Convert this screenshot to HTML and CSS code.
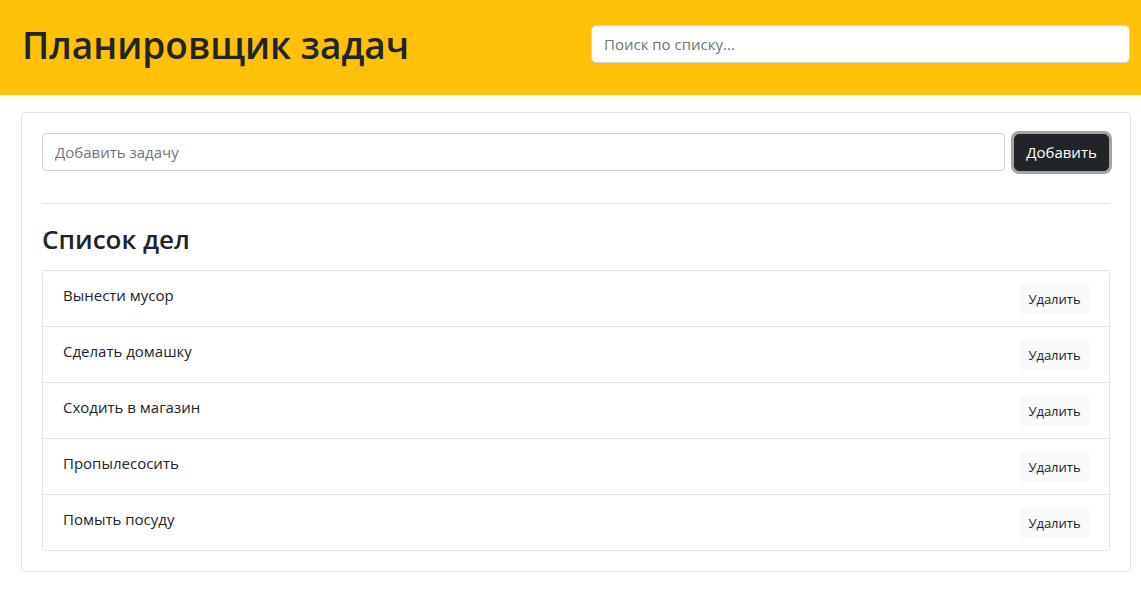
FILE: index.html
```html
<!DOCTYPE html>
<html lang="ru">
<head>
<meta charset="utf-8">
<title>Планировщик задач</title>
<link rel="stylesheet" href="styles.css">
</head>
<body>
<header class="topbar">
  <h1 class="title">Планировщик задач</h1>
  <input class="search" type="text" placeholder="Поиск по списку...">
</header>
<main class="card">
  <form class="add-form">
    <input class="add-input" type="text" placeholder="Добавить задачу">
    <button class="add-btn" type="button">Добавить</button>
  </form>
  <hr class="divider">
  <h3 class="list-title">Список дел</h3>
  <ul class="list">
    <li class="item"><span class="item-text">Вынести мусор</span><button class="del-btn" type="button">Удалить</button></li>
    <li class="item"><span class="item-text">Сделать домашку</span><button class="del-btn" type="button">Удалить</button></li>
    <li class="item"><span class="item-text">Сходить в магазин</span><button class="del-btn" type="button">Удалить</button></li>
    <li class="item"><span class="item-text">Пропылесосить</span><button class="del-btn" type="button">Удалить</button></li>
    <li class="item"><span class="item-text">Помыть посуду</span><button class="del-btn" type="button">Удалить</button></li>
  </ul>
</main>
</body>
</html>
```
FILE: styles.css
```css
* { box-sizing: border-box; }
body {
  margin: 0;
  font-family: "Open Sans", "Noto Sans", sans-serif;
  color: #212529;
  background: #fff;
}
.topbar {
  background: #ffc107;
  height: 95px;
  display: flex;
  align-items: center;
  padding: 0 11px 0 22px;
}
.title {
  flex: 1;
  margin: 0;
  font-size: 37px;
  font-weight: 600;
  color: #212529;
  line-height: 1.2;
  position: relative;
  top: -2px;
}
.search {
  width: 539px;
  height: 38px;
  margin-top: -7px;
  border: 1px solid #ced4da;
  border-radius: 5px;
  padding: 0 12px;
  font: inherit;
  font-size: 15px;
  color: #212529;
  background: #fff;
}
.search::placeholder, .add-input::placeholder { color: #6c757d; }
.card {
  margin: 17px 10px 0 21px;
  border: 1px solid #dee2e6;
  border-radius: 4px;
  padding: 20px;
}
.add-form {
  display: flex;
  align-items: center;
  gap: 9px;
  height: 38px;
}
.add-input {
  flex: 1;
  height: 38px;
  border: 1px solid #ced4da;
  border-radius: 4px;
  padding: 0 12px;
  font: inherit;
  font-size: 15px;
  color: #212529;
}
.add-btn {
  width: 95px;
  height: 37px;
  margin-right: 1px;
  background: #212529;
  color: #fff;
  border: 1px solid #212529;
  border-radius: 5px;
  box-shadow: 0 0 0 3px rgba(130,134,138,0.75);
  font: inherit;
  font-size: 15px;
}
.divider {
  margin: 32px 0 0;
  border: 0;
  border-top: 1px solid #e3e5e8;
}
.list-title {
  margin: 17px 0 13px;
  font-size: 26px;
  font-weight: 600;
  line-height: 36px;
}
.list {
  list-style: none;
  margin: 0;
  padding: 0;
  border: 1px solid #dee2e6;
  border-radius: 4px;
}
.item {
  display: flex;
  align-items: center;
  justify-content: space-between;
  height: 56px;
  padding: 0 20px;
  border-top: 1px solid #dee2e6;
  font-size: 15px;
}
.item:first-child { border-top: 0; height: 55px; }
.item-text { position: relative; top: -4px; }
.del-btn {
  height: 31px;
  width: 69px;
  padding: 0;
  background: #f8f9fa;
  border: 0;
  border-radius: 4px;
  color: #212529;
  font: inherit;
  font-size: 13px;
}
```
